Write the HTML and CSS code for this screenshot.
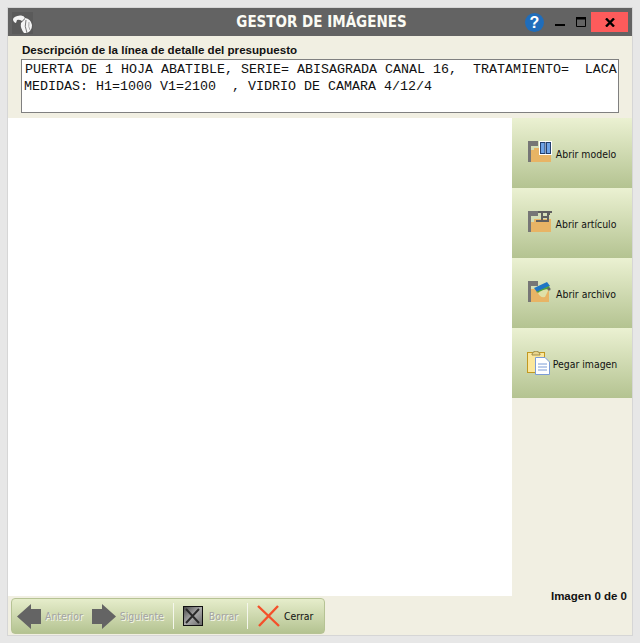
FILE: index.html
```html
<!DOCTYPE html>
<html lang="es">
<head>
<meta charset="utf-8">
<title>Gestor de imágenes</title>
<link rel="stylesheet" href="styles.css">
</head>
<body>
<div class="window">
  <header class="titlebar">
    <div class="logo">
      <svg width="21" height="22" viewBox="0 0 21 22"><rect width="21" height="22" fill="#5a5a5a"/><path d="M1 7Q2 4 8 3.5Q12 3 13 6L10 9Q7 7 5 8L4 11Q1 10 1 7Z" fill="#f4f4f4"/><path d="M13 6Q19 7 20 13Q20 19 15 21L12 21Q8 16 9 11L13 7Z" fill="#f4f4f4"/><path d="M14 8Q12 14 15 21" stroke="#777" stroke-width="1" fill="none"/><path d="M17 10Q16 15 18 18" stroke="#aaa" stroke-width="1" fill="none"/></svg>
    </div>
    <h1 class="title">GESTOR DE IMÁGENES</h1>
    <div class="controls">
      <span class="help">?</span>
      <svg class="ctl-min" width="10" height="2"><rect width="10" height="2" fill="#000"/></svg>
      <svg class="ctl-max" width="10" height="10"><path d="M.5 .5H9.5V9.5H.5Z" fill="none" stroke="#000"/><rect width="10" height="2.5" fill="#000"/></svg>
      <span class="close"><svg width="10" height="9" viewBox="0 0 10 9"><path d="M1 .5L9 8.5M9 .5L1 8.5" stroke="#000" stroke-width="2.4"/></svg></span>
    </div>
  </header>
  <section class="desc">
    <label class="desc-label">Descripción de la línea de detalle del presupuesto</label>
    <div class="desc-box">
      <div class="line first">PUERTA DE 1 HOJA ABATIBLE, SERIE= ABISAGRADA CANAL 16,  TRATAMIENTO=  LACADO</div>
      <div class="line">MEDIDAS: H1=1000 V1=2100  , VIDRIO DE CAMARA 4/12/4</div>
    </div>
  </section>
  <main class="body">
    <div class="canvas"></div>
    <aside class="side">
      <button class="side-btn">
        <svg width="24" height="24" viewBox="0 0 24 24"><path d="M0 0H10V5H3V21H0Z" fill="#767676"/><path d="M6 7H12V9H23V21H3V9H6Z" fill="#e8b465"/><rect x="11" y="0" width="13" height="14" fill="#fff"/><rect x="12.5" y="1.5" width="4.5" height="11" fill="#6fa3e6" stroke="#24406e"/><rect x="18.5" y="1.5" width="4" height="11" fill="#6fa3e6" stroke="#24406e"/></svg>
        <span>Abrir modelo</span>
      </button>
      <button class="side-btn">
        <svg width="24" height="24" viewBox="0 0 24 24"><path d="M0 0H10V5H3V21H0Z" fill="#767676"/><path d="M6 8H23V21H3V11H6Z" fill="#e8b465"/><path d="M10 1H24M14 1V10H8M21 1V4M14 6H20M20 1V10H14" stroke="#5f5f5f" stroke-width="2" fill="none"/></svg>
        <span>Abrir artículo</span>
      </button>
      <button class="side-btn">
        <svg width="24" height="24" viewBox="0 0 24 24"><path d="M0 0H10V5H3V21H0Z" fill="#767676"/><path d="M3 8H21V21H3Z" fill="#e8b465"/><path d="M6 7L19 1L22 5L9 11Z" fill="#1f75c4"/><path d="M8 11L21 5L22 8L15 13Z" fill="#4fa03a"/><path d="M10 12Q15 8 21 8L17 16Q12 17 10 12Z" fill="#dfe0a8"/><circle cx="21" cy="8" r="1.6" fill="#666"/></svg>
        <span>Abrir archivo</span>
      </button>
      <button class="side-btn paste">
        <svg width="23" height="24" viewBox="0 0 23 24"><rect x=".5" y="1.5" width="17" height="20" fill="#fbe79c" stroke="#c2981f"/><path d="M5 3Q5 1 9 0Q13 1 13 3V4H5Z" fill="#e9d58c" stroke="#8a7a3a" stroke-width=".8"/><path d="M8.5 6.5H18L22.5 11V23.5H8.5Z" fill="#fff" stroke="#7b9cd6"/><path d="M11 13H20M11 16H20M11 19H20" stroke="#7b9cd6"/></svg>
        <span>Pegar imagen</span>
      </button>
    </aside>
  </main>
  <footer class="footer">
    <div class="toolbar">
      <div class="tool disabled tool-prev">
        <svg width="24" height="25" viewBox="0 0 24 25"><path d="M0 12.5L14 0V5H24V20H14V25Z" fill="#646464"/></svg>
        <span>Anterior</span>
      </div>
      <div class="tool disabled tool-next">
        <svg width="24" height="25" viewBox="0 0 24 25"><path d="M24 12.5L10 0V5H0V20H10V25Z" fill="#646464"/></svg>
        <span>Siguiente</span>
      </div>
      <i class="sep"></i>
      <div class="tool disabled tool-del">
        <svg width="20" height="20" viewBox="0 0 20 20"><defs><linearGradient id="gr" x1="0" y1="0" x2="1" y2="1"><stop offset="0" stop-color="#444"/><stop offset=".5" stop-color="#aaa"/><stop offset="1" stop-color="#666"/></linearGradient></defs><rect x=".5" y=".5" width="19" height="19" fill="url(#gr)" stroke="#111"/><path d="M3 3L16 17M16 3L3 17" stroke="#2a2a2a" stroke-width="2"/></svg>
        <span>Borrar</span>
      </div>
      <i class="sep"></i>
      <div class="tool tool-close">
        <svg width="23" height="22" viewBox="0 0 23 22"><path d="M1 1L22 21M21 1L2 21" stroke="#f4502a" stroke-width="2.4"/></svg>
        <span>Cerrar</span>
      </div>
    </div>
    <div class="counter">Imagen 0 de 0</div>
  </footer>
</div>
</body>
</html>
```
FILE: styles.css
```css
* { box-sizing: border-box; }
html, body { margin: 0; height: 643px; overflow: hidden; }
body { background: #e7e7e7; padding: 7px; font-family: "DejaVu Sans", sans-serif; }

.window {
  height: 629px;
  border: 1px solid #d6d6d6;
  background: #f1efe2;
  display: flex;
  flex-direction: column;
}

.titlebar {
  height: 28px;
  flex: none;
  background: #636363;
  display: grid;
  grid-template-columns: 1fr auto 1fr;
  align-items: center;
}
.logo { padding: 1px 0 0 4px; display: flex; }
.title {
  margin: 0 0 0 3px;
  font: bold 15px "DejaVu Sans", sans-serif;
  font-stretch: condensed;
  color: #fbfbf4;
  white-space: nowrap;
}
.controls { display: flex; align-items: center; justify-content: flex-end; padding-right: 4px; }
.help {
  width: 19px; height: 19px;
  border-radius: 50%;
  background: #1f6dbb;
  color: #fff;
  font: bold 16px/19px "Liberation Sans", sans-serif;
  text-align: center;
  margin-right: 11px;
}
.ctl-min { margin: 5px 11px 0 0; }
.ctl-max { margin: 0 5px 0 0; }
.close {
  width: 37px; height: 20px;
  background: #fd5b5b;
  display: flex; align-items: center; justify-content: center;
}

.desc { flex: none; height: 82px; padding: 7px 13px 0; }
.desc-label { display: block; padding-left: 1px; font: bold 11.6px/13px "Liberation Sans", sans-serif; color: #111; }
.desc-box {
  margin-top: 3px;
  height: 54px;
  border: 1px solid #808080;
  background: #fff;
  padding: 0 0 0 2px;
  overflow: hidden;
  font: 13.333px/17px "Liberation Mono", monospace;
  color: #111;
}
.line { white-space: pre; width: 593px; overflow: hidden; }
.line.first { padding: 1px 0 0 1px; }

.body { flex: 1; min-height: 0; display: flex; }
.canvas { flex: 1; background: #fff; }
.side { width: 120px; flex: none; display: flex; flex-direction: column; }
.side-btn {
  height: 70px;
  border: 0;
  padding: 0;
  background: linear-gradient(#ebf1d2, #b4c391);
  display: flex; align-items: center; justify-content: center;
  gap: 4px;
  font: 10.4px "DejaVu Sans", sans-serif;
  font-stretch: condensed;
  color: #111;
}
.side-btn.paste { gap: 3px; }
.side-btn span { padding-top: 2px; }

.footer { flex: none; height: 39px; display: flex; justify-content: space-between; align-items: flex-start; padding: 2px 5px 0 3px; }
.toolbar {
  width: 314px; height: 36px;
  flex: none;
  border: 1px solid #b6c394;
  border-radius: 4px;
  background: linear-gradient(#e6edcb, #b4c391);
  display: flex; align-items: center;
  padding-left: 5px;
  font: 10.4px "DejaVu Sans", sans-serif;
  font-stretch: condensed;
  color: #111;
}
.tool { display: flex; flex: none; align-items: center; gap: 4px; }
.tool.disabled span { color: #a3a3a3; text-shadow: 1px 1px 0 #f4f6e8; }
.tool-next { margin-left: 9px; }
.tool-del { gap: 6px; }
.sep { flex: none; width: 1px; height: 26px; background: #f4f6ec; margin: 0 9px; }
.counter { margin-top: -8px; font: bold 11.5px/13px "Liberation Sans", sans-serif; color: #111; }
```
